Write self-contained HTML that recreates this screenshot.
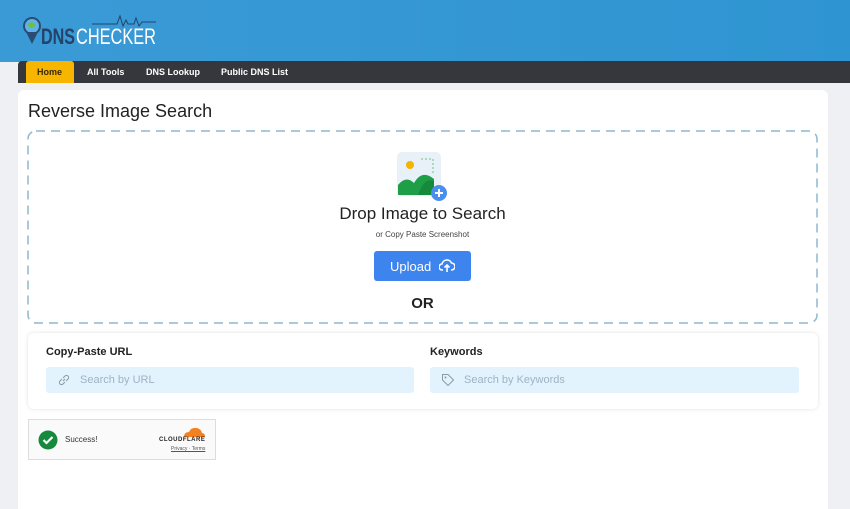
<!DOCTYPE html>
<html><head><style>
*{margin:0;padding:0;box-sizing:border-box}
html,body{width:850px;height:509px;overflow:hidden}
body{background:#eef0f3;font-family:"Liberation Sans",sans-serif;position:relative}
.hdr{position:absolute;left:0;top:0;width:850px;height:62px;background:linear-gradient(90deg,#3a9ad6,#2f95d2)}
.nav{position:absolute;left:18px;top:61px;width:832px;height:22px;background:#35373c;border-radius:4px 0 0 0}
.nav span{position:absolute;top:6px;font-size:9px;font-weight:bold;color:#fff}
.home{position:absolute;left:8px;top:0;width:48px;height:22px;background:#f7b500;border-radius:3px 3px 0 0}
.card{position:absolute;left:18px;top:90px;width:810px;height:430px;background:#fff;border-radius:6px}
.inp{position:absolute;height:26px;background:#e3f3fd;border-radius:3px;font-size:11px;color:#9db3c4}
</style></head><body>
<div class="hdr"></div>
<svg style="position:absolute;left:22px;top:14px" width="140" height="38" viewBox="0 0 140 38">
<circle cx="10" cy="12" r="8" fill="#5fb3e8" stroke="#2a4c74" stroke-width="2"/>
<path d="M5 10 q5 -4 9 1 q-3 4 -7 2z" fill="#6cbf4a"/>
<path d="M4 18 L10 30 L16 18" fill="#2a4c74"/>
<text x="19" y="30" font-family="Liberation Sans" font-weight="bold" font-size="22" fill="#24426a" textLength="34" lengthAdjust="spacingAndGlyphs">DNS</text>
<text x="54" y="30" font-family="Liberation Sans" font-size="22" fill="#fff" textLength="80" lengthAdjust="spacingAndGlyphs">CHECKER</text>
<path d="M70 10 L95 10 L98 2 L101 12 L104 6 L106 10 L112 10 L114 4 L117 12 L120 8 L134 8" stroke="#24426a" stroke-width="1" fill="none"/>
</svg>
<div class="nav"><div class="home"></div>
<span style="left:19px;color:#3a2a00">Home</span><span style="left:69px">All Tools</span><span style="left:128px">DNS Lookup</span><span style="left:203px">Public DNS List</span></div>
<div class="card"></div>
<div style="position:absolute;left:28px;top:101px;font-size:18px;color:#222">Reverse Image Search</div>
<svg style="position:absolute;left:27px;top:130px" width="792" height="195"><rect x="1" y="1" width="789" height="192" rx="8" fill="none" stroke="#8fb7cf" stroke-width="1.5" stroke-dasharray="9 6"/></svg>
<svg style="position:absolute;left:396px;top:151px" width="52" height="52" viewBox="0 0 52 52">
<rect x="1" y="1" width="44" height="44" rx="5" fill="#e8f0f8"/>
<path d="M25 8 H37 V22" stroke="#6dbf8a" stroke-dasharray="2 2" fill="none"/>
<circle cx="14" cy="14" r="4" fill="#f4b400"/>
<path d="M2 44 V34 q8 -10 16 -2 q8 -14 20 -4 V44z" fill="#1f9e48"/>
<path d="M22 44 q6 -18 16 -14 V44z" fill="#168a3c"/>
<circle cx="43" cy="42" r="8" fill="#4a8ff0"/>
<path d="M43 38 V46 M39 42 H47" stroke="#fff" stroke-width="2"/>
</svg>
<div style="position:absolute;left:0;width:845px;top:204px;text-align:center;font-size:17px;color:#222">Drop Image to Search</div>
<div style="position:absolute;left:0;width:845px;top:230px;text-align:center;font-size:8px;color:#444">or Copy Paste Screenshot</div>
<div style="position:absolute;left:374px;top:251px;width:97px;height:30px;background:#3d84ee;border-radius:3px;color:#fff;font-size:13px;padding:8px 0 0 16px">Upload
<svg style="position:absolute;left:65px;top:8px" width="16" height="14" viewBox="0 0 16 14"><path d="M4 11 H3 a3 3 0 0 1 0 -6 a5 5 0 0 1 9.5 -1 a3.5 3.5 0 0 1 0 7 H12" stroke="#fff" stroke-width="1.6" fill="none"/><path d="M8 13 V6 M5.5 8.5 L8 6 L10.5 8.5" stroke="#fff" stroke-width="1.6" fill="none"/></svg></div>
<div style="position:absolute;left:0;width:845px;top:295px;text-align:center;font-size:15px;font-weight:bold;color:#222">OR</div>
<div style="position:absolute;left:28px;top:333px;width:790px;height:76px;background:#fff;border-radius:6px;box-shadow:0 0 4px rgba(0,0,0,.12)"></div>
<div style="position:absolute;left:46px;top:346px;font-size:11px;font-weight:bold;color:#222">Copy-Paste URL</div>
<div style="position:absolute;left:430px;top:346px;font-size:11px;font-weight:bold;color:#222">Keywords</div>
<div class="inp" style="left:46px;top:367px;width:368px;padding:7px 0 0 34px">Search by URL
<svg style="position:absolute;left:11px;top:6px" width="14" height="14" viewBox="0 0 14 14"><path d="M6 8 L8 6 M5 6 L3 8 a2 2 0 0 0 3 3 L8 9 M9 8 L11 6 a2 2 0 0 0 -3 -3 L6 5" stroke="#8a9aa8" fill="none"/></svg></div>
<div class="inp" style="left:430px;top:367px;width:369px;padding:7px 0 0 34px">Search by Keywords
<svg style="position:absolute;left:11px;top:6px" width="14" height="14" viewBox="0 0 14 14"><path d="M1.5 1.5 H7 L12.5 7 L7 12.5 L1.5 7z" stroke="#8a9aa8" fill="none"/><circle cx="4.5" cy="4.5" r="1" fill="#8a9aa8"/></svg></div>
<div style="position:absolute;left:28px;top:419px;width:188px;height:41px;background:#fafafa;border:1px solid #ddd"></div>
<svg style="position:absolute;left:38px;top:430px" width="20" height="20"><circle cx="10" cy="10" r="9.5" fill="#168a3c"/><path d="M5.5 10 L8.5 13 L14.5 7" stroke="#fff" stroke-width="2.2" fill="none"/></svg>
<div style="position:absolute;left:65px;top:435px;font-size:8px;color:#333">Success!</div>
<svg style="position:absolute;left:182px;top:426px" width="24" height="12"><path d="M2 11 q0 -5 5 -5 q2 -5 8 -4 q4 1 5 5 q3 0 3 4z" fill="#f48120"/></svg>
<div style="position:absolute;left:159px;top:437px;font-size:6px;font-weight:bold;letter-spacing:.5px;color:#222">CLOUDFLARE</div>
<div style="position:absolute;left:171px;top:446px;font-size:5px;color:#555;text-decoration:underline">Privacy · Terms</div>
</body></html>
